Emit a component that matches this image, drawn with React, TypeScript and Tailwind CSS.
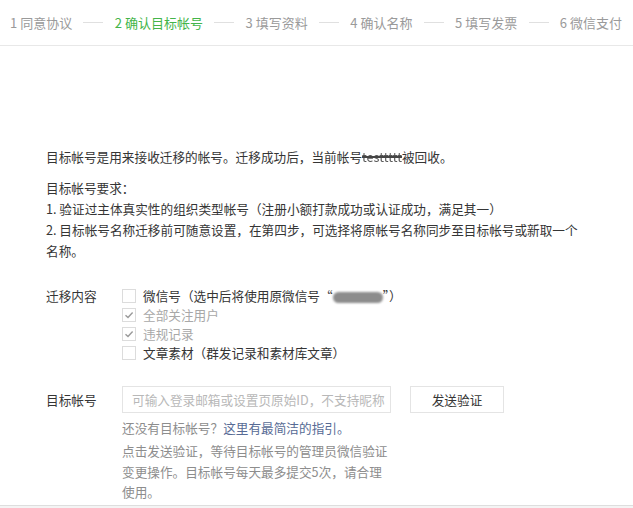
import React from 'react';

const steps = ['1 同意协议', '2 确认目标帐号', '3 填写资料', '4 确认名称', '5 填写发票', '6 微信支付'];
const activeStep = 1;

const options = [
  { label: 'wx', checked: false, disabled: false },
  { label: '全部关注用户', checked: true, disabled: true },
  { label: '违规记录', checked: true, disabled: true },
  { label: '文章素材（群发记录和素材库文章）', checked: false, disabled: false },
];

const Checkbox = ({ checked }: { checked: boolean }) => (
  <span className="w-[14px] h-[14px] border border-[#dcdcdc] bg-white flex items-center justify-center shrink-0">
    {checked && (
      <svg width="10" height="10" viewBox="0 0 10 10" fill="none">
        <path d="M1.5 5.2 L4 7.5 L8.6 2.5" stroke="#9a9a9a" strokeWidth="1.4" />
      </svg>
    )}
  </span>
);

const App = () => {
  return (
    <div
      className="w-[633px] h-[508px] bg-white overflow-hidden flex flex-col text-[12.65px] text-[#353535]"
      style={{ fontFamily: '"Noto Sans CJK SC", "Noto Sans", sans-serif' }}
    >
      {/* step bar */}
      <div className="h-[46px] border-b border-[#e8e8e8] flex items-center justify-between pl-[10px] pr-[11px] text-[13px] text-[#9a9a9a] shrink-0">
        {steps.map((s, i) => (
          <React.Fragment key={s}>
            {i > 0 && <span className="w-[20px] h-px bg-[#e0e0e0]" />}
            <span className={i === activeStep ? 'text-[#44b549]' : ''}>{s}</span>
          </React.Fragment>
        ))}
      </div>

      <div className="flex-1 flex flex-col pl-[46px] pt-[100px] leading-[21px]">
        <p>
          目标帐号是用来接收迁移的帐号。迁移成功后，当前帐号
          <span className="text-[#555] line-through decoration-[#444] decoration-2 blur-[0.4px]">testtttt</span>
          被回收。
        </p>
        <p className="mt-[10px]">目标帐号要求：</p>
        <p>1. 验证过主体真实性的组织类型帐号（注册小额打款成功或认证成功，满足其一）</p>
        <p className="pr-[52px]">2. 目标帐号名称迁移前可随意设置，在第四步，可选择将原帐号名称同步至目标帐号或新取一个名称。</p>

        <div className="flex mt-[25px]">
          <span className="w-[76px] leading-[19px]">迁移内容</span>
          <div className="flex flex-col">
            {options.map((o) => (
              <label key={o.label} className="h-[19px] flex items-center gap-[7px]">
                <Checkbox checked={o.checked} />
                <span className={o.disabled ? 'text-[#a8a8a8]' : ''}>
                  {o.label === 'wx' ? (
                    <>
                      微信号（选中后将使用原微信号“
                      <span className="inline-block align-middle w-[50px] h-[11px] rounded-full bg-[#8c8c8c] blur-[1px]" />
                      ”）
                    </>
                  ) : (
                    o.label
                  )}
                </span>
              </label>
            ))}
          </div>
        </div>

        <div className="flex mt-[24px]">
          <span className="w-[76px] leading-[27px]">目标帐号</span>
          <div className="flex flex-col">
            <div className="flex items-center gap-[19px]">
              <div className="w-[269px] h-[27px] border border-[#e4e4e4] flex items-center px-[9px] text-[#b8b8b8] whitespace-nowrap overflow-hidden">
                可输入登录邮箱或设置页原始ID，不支持昵称
              </div>
              <button className="w-[94px] h-[27px] border border-[#e4e4e4] bg-white text-[#353535]">发送验证</button>
            </div>
            <p className="mt-[5px] leading-[20px] text-[#8d8d8d]">
              还没有目标帐号？<span className="text-[#576b95]">这里有最简洁的指引。</span>
            </p>
            <p className="mt-[3px] w-[270px] leading-[20.5px] text-[#8d8d8d]">
              点击发送验证，等待目标帐号的管理员微信验证变更操作。目标帐号每天最多提交5次，请合理使用。
            </p>
          </div>
        </div>
      </div>
      <div className="h-[3px] border-t border-[#dedede] bg-[#f4f4f4] shrink-0" />
    </div>
  );
};

export default App;
